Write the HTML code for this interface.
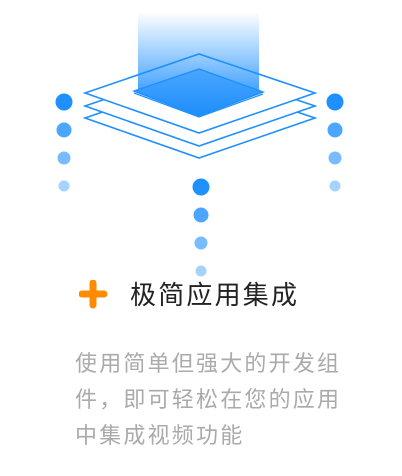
<!DOCTYPE html>
<html><head><meta charset="utf-8"><style>
body{margin:0;width:402px;height:476px;background:#fff;overflow:hidden;position:relative;font-family:"Liberation Sans","Noto Sans CJK SC",sans-serif}
.t{position:absolute;left:130px;top:278px;font-size:26px;color:#222;line-height:34px;letter-spacing:2.2px}
.p{position:absolute;left:75px;top:346px;width:320px;font-size:22px;color:#aaa;line-height:36px;letter-spacing:2.2px;white-space:nowrap}
</style></head><body>
<svg width="402" height="300" style="position:absolute;left:0;top:0">
<defs>
<linearGradient id="g" x1="0" y1="0" x2="0" y2="1"><stop offset="0" stop-color="#1e90ff" stop-opacity="0"/><stop offset="1" stop-color="#1e90ff" stop-opacity="0.85"/></linearGradient>
<linearGradient id="g2" x1="0" y1="0" x2="0" y2="1"><stop offset="0" stop-color="#4aa6ff"/><stop offset="1" stop-color="#1e8efc"/></linearGradient>
</defs>
<g fill="none" stroke="#1e90ff" stroke-width="1.6">
<path d="M85 118 L199 79 L315 118 L199 158 Z" fill="#fff"/>
<path d="M85 106 L199 67 L315 106 L199 146 Z" fill="#fff"/>
<path d="M85 93 L199 54 L315 93 L199 133 Z" fill="#fff"/>
</g>
<rect x="138" y="12" width="121" height="81" fill="url(#g)"/>
<path d="M134 91 L199 69 L263 92 L199 116 Z" fill="url(#g2)" stroke="#1e90ff" stroke-width="1.4"/>
<path d="M134 93 L199 117 L263 94" fill="none" stroke="#1e90ff" stroke-width="1.2"/>
<g fill="#1e90ff">
<circle cx="64" cy="102" r="8.5"/><circle cx="64" cy="130" r="7.5" opacity=".8"/><circle cx="64" cy="158" r="6.5" opacity=".6"/><circle cx="64" cy="186" r="5.5" opacity=".4"/>
<circle cx="335" cy="102" r="8.5"/><circle cx="335" cy="130" r="7.5" opacity=".8"/><circle cx="335" cy="158" r="6.5" opacity=".6"/><circle cx="335" cy="186" r="5.5" opacity=".4"/>
<circle cx="201" cy="187" r="8.5"/><circle cx="201" cy="215" r="7.5" opacity=".8"/><circle cx="201" cy="243" r="6.5" opacity=".6"/><circle cx="201" cy="271" r="5.5" opacity=".4"/>
</g>
</svg>
<svg width="30" height="30" style="position:absolute;left:79px;top:280px"><path d="M3 14 H25 M14 3 V25" stroke="#ff8c00" stroke-width="7" stroke-linecap="round"/></svg>
<div class="t">极简应用集成</div>
<div class="p">使用简单但强大的开发组<br>件，即可轻松在您的应用<br>中集成视频功能</div>
</body></html>
